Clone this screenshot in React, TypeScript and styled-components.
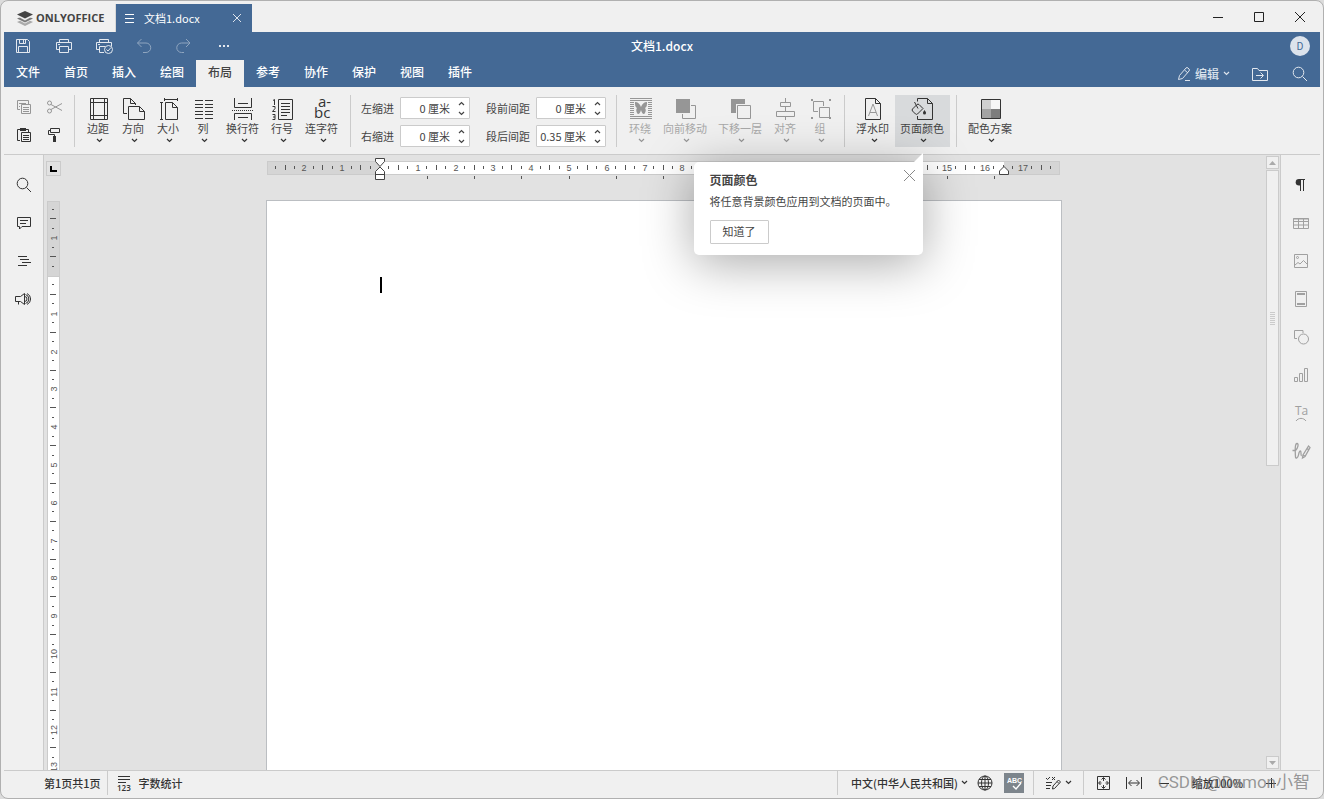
import React from "react";
import styled, { createGlobalStyle, css } from "styled-components";

const color = {
  brand: "#446995",
  panel: "#f0f0f0",
  canvas: "#e2e2e2",
  line: "#cbcbcb",
  text: "#444444",
  icon: "#333333",
  muted: "#a8a8a8",
  mutedIcon: "#969696",
};

const GlobalStyle = createGlobalStyle`
  *, *::before, *::after { box-sizing: border-box; }
  body {
    margin: 0;
    background: #dcdcdc;
    color: ${color.text};
    font-family: "Noto Sans CJK SC", "Open Sans", sans-serif;
    font-size: 11px;
    line-height: 16px;
  }
  button, input { font: inherit; color: inherit; }
  button { border: 0; padding: 0; background: none; cursor: pointer; white-space: nowrap; }
  svg { display: block; flex: none; overflow: visible; }
`;

/* ---------- Icons ---------- */

type IconProps = { w?: number; h?: number; x?: number; children: React.ReactNode };

const Icon = ({ w = 20, h = 20, x = 0, children }: IconProps) => (
  <svg width={w} height={h} viewBox={`${x} 0 ${w} ${h}`} fill="none" stroke="currentColor" aria-hidden="true">
    {children}
  </svg>
);

const Chevron = () => (
  <Icon w={7} h={5}>
    <path d="M1 1l2.5 2.5L6 1" strokeWidth="1.2" />
  </Icon>
);

const ChevronUp = () => (
  <Icon w={7} h={5}>
    <path d="M1 4l2.5-2.5L6 4" strokeWidth="1.2" />
  </Icon>
);

const SearchIcon = () => (
  <Icon>
    <circle cx="8.5" cy="8.5" r="5.3" />
    <path d="M12.5 12.5l4.5 4.5" />
  </Icon>
);

/* ---------- Window ---------- */

const Window = styled.div`
  height: 100vh;
  min-height: 480px;
  display: flex;
  flex-direction: column;
  padding: 0 3px;
  border: 1px solid #b0b0b0;
  border-radius: 8px;
  background: ${color.panel};
  overflow: hidden;
`;

const TitleBar = styled.header`
  display: flex;
  align-items: flex-end;
  height: 31px;
  flex: none;
`;

const Brand = styled.div`
  display: flex;
  align-items: center;
  gap: 2px;
  width: 112px;
  height: 28px;
  padding-left: 12px;
  border-right: 1px solid #d8d8d8;
  font: 700 11px/16px "Open Sans", sans-serif;
  color: #444;
`;

const FileTab = styled.div`
  display: flex;
  align-items: center;
  gap: 8px;
  width: 136px;
  height: 28px;
  padding: 0 10px 0 8px;
  background: ${color.brand};
  color: #fff;
`;

const FileName = styled.span`
  flex: 1;
  white-space: nowrap;
`;

const FileClose = styled.button`
  color: #dce3ec;
`;

const WindowControls = styled.div`
  display: flex;
  align-self: center;
  margin-left: auto;
`;

const WindowButton = styled.button`
  display: flex;
  align-items: center;
  justify-content: center;
  width: 41px;
  height: 28px;
  color: #222;
`;

/* ---------- Header ---------- */

const Header = styled.div`
  flex: none;
  background: ${color.brand};
  color: #fff;
`;

const QuickRow = styled.div`
  display: grid;
  grid-template-columns: 1fr auto 1fr;
  align-items: center;
  height: 28px;
`;

const QuickActions = styled.div`
  display: flex;
`;

const QuickButton = styled.button<{ $dim?: boolean }>`
  display: flex;
  align-items: center;
  justify-content: center;
  width: 40px;
  height: 28px;
  color: #fff;
  opacity: ${(p) => (p.$dim ? 0.4 : 0.85)};
`;

const DocumentTitle = styled.h1`
  margin: 0;
  font-size: 12px;
  font-weight: 500;
  line-height: 16px;
`;

const Avatar = styled.button`
  justify-self: end;
  width: 20px;
  height: 20px;
  margin-right: 10px;
  border-radius: 50%;
  background: #dce3ec;
  color: ${color.brand};
  font-size: 10px;
  line-height: 20px;
`;

const TabRow = styled.nav`
  display: flex;
  height: 27px;
`;

const RibbonTab = styled.button<{ $active?: boolean }>`
  width: 48px;
  font-size: 12px;
  font-weight: 500;
  line-height: 24px;
  padding-bottom: 3px;
  ${(p) =>
    p.$active &&
    css`
      background: ${color.panel};
      color: ${color.text};
    `}
`;

const TabActions = styled.div`
  display: flex;
  align-items: center;
  margin-left: auto;
  color: #dce3ec;
`;

const EditMode = styled.button`
  display: flex;
  align-items: center;
  gap: 4px;
  margin-right: 10px;
  font-size: 12px;
  font-weight: 500;
`;

/* ---------- Toolbar ---------- */

const Toolbar = styled.div`
  position: relative;
  z-index: 2;
  display: flex;
  align-items: center;
  flex: none;
  height: 68px;
  padding-left: 4px;
  border-bottom: 1px solid ${color.line};
`;

const Clipboard = styled.div`
  display: grid;
  grid-template-columns: 30px 30px;
  grid-auto-rows: 28px;
`;

const SmallButton = styled.button<{ $dim?: boolean }>`
  display: flex;
  align-items: center;
  justify-content: center;
  color: ${(p) => (p.$dim ? color.mutedIcon : color.icon)};
`;

const Separator = styled.span`
  flex: none;
  width: 1px;
  height: 52px;
  margin: 0 6px;
  background: ${color.line};
`;

const toolWidth = { s: 35, m: 44, l: 55 };

const ToolButton = styled.button<{ $size: "s" | "m" | "l"; $pressed?: boolean }>`
  display: flex;
  flex-direction: column;
  align-items: center;
  flex: none;
  width: ${(p) => toolWidth[p.$size]}px;
  height: 52px;
  padding-top: 2px;
  color: ${color.icon};
  background: ${(p) => (p.$pressed ? "#d8dadc" : "none")};

  &:disabled {
    color: ${color.mutedIcon};
    cursor: default;
  }
`;

const ToolLabel = styled.span`
  margin-bottom: 3px;
  padding-right: 1px;
  line-height: 14px;
  color: ${color.text};

  :disabled > & {
    color: ${color.muted};
  }
`;

const ToolArrow = styled.span`
  padding-left: 2px;
`;

const Fields = styled.div`
  display: grid;
  grid-template-columns: auto 70px auto 70px;
  align-items: center;
  gap: 6px;
  padding: 3px 4px 0;
`;

const FieldLabel = styled.label<{ $second?: boolean }>`
  margin-left: ${(p) => (p.$second ? 10 : 0)}px;
`;

const Spin = styled.div`
  display: flex;
  height: 22px;
  border: 1px solid ${color.line};
  border-radius: 1px;
  background: #fff;
`;

const SpinInput = styled.input`
  flex: 1;
  min-width: 0;
  padding: 0 3px 0 0;
  border: 0;
  background: none;
  text-align: right;
  outline: none;
`;

const SpinArrows = styled.div`
  display: flex;
  flex-direction: column;
  width: 16px;
`;

const SpinArrow = styled.button`
  flex: 1;
  display: flex;
  align-items: center;
  justify-content: center;
`;

/* ---------- Tip ---------- */

const TipAnchor = styled.div`
  position: relative;
  flex: none;
`;

const Tip = styled.div`
  position: absolute;
  top: 67px;
  right: 50%;
  width: 229px;
  padding: 10px 16px 11px;
  border-radius: 5px 0 5px 5px;
  background: #fff;
  box-shadow: 0 8px 50px rgba(0, 0, 0, 0.34);

  &::before {
    content: "";
    position: absolute;
    right: 0;
    bottom: 100%;
    border-left: 9px solid transparent;
    border-bottom: 9px solid #fff;
  }
`;

const TipTitle = styled.h2`
  margin: 0 0 5px;
  font-size: 12px;
  font-weight: 700;
  line-height: 16px;
`;

const TipText = styled.p`
  margin: 0 0 11px;
  white-space: nowrap;
`;

const TipClose = styled.button`
  position: absolute;
  top: 7px;
  right: 7px;
  color: #888;
`;

const TipButton = styled.button`
  width: 59px;
  height: 24px;
  padding-bottom: 2px;
  border: 1px solid ${color.line};
  border-radius: 1px;
`;

/* ---------- Workspace ---------- */

const Workspace = styled.main`
  display: flex;
  flex: 1;
  min-height: 0;
  background: ${color.canvas};
`;

const SideBar = styled.aside<{ $right?: boolean }>`
  display: flex;
  flex-direction: column;
  flex: none;
  width: 40px;
  padding-top: 11px;
  background: ${color.panel};
  ${(p) => (p.$right ? "border-left" : "border-right")}: 1px solid ${color.line};
`;

const SideButton = styled.button<{ $dim?: boolean }>`
  display: flex;
  align-items: center;
  justify-content: center;
  height: 38px;
  color: ${(p) => (p.$dim ? "#a0a0a0" : color.icon)};
`;

const RulerColumn = styled.div`
  display: flex;
  flex-direction: column;
  flex: none;
  width: 18px;
  padding: 6px 1px 0 2px;
`;

const TabStopButton = styled.button`
  display: flex;
  align-items: center;
  justify-content: center;
  flex: none;
  width: 15px;
  height: 15px;
  margin-bottom: 25px;
  border: 1px solid ${color.line};
`;

const RulerClip = styled.div`
  flex: 1;
  min-height: 0;
  padding-left: 1px;
  overflow: hidden;
`;

const Editor = styled.section`
  display: flex;
  flex-direction: column;
  align-items: center;
  flex: 1;
  min-width: 0;
  overflow: hidden;
`;

const RulerRow = styled.div`
  flex: none;
  width: 796px;
  height: 45px;
`;

const Page = styled.div`
  flex: 1;
  width: 796px;
  padding: 76px 113px 0;
  border: 1px solid #bbbec2;
  border-bottom: 0;
  background: #fff;
`;

const Caret = styled.span`
  display: block;
  width: 2px;
  height: 16px;
  background: #000;
`;

const ScrollBar = styled.div`
  display: flex;
  flex-direction: column;
  flex: none;
  gap: 1px;
  width: 14px;
  padding: 1px 1px 1px 0;
`;

const scrollPart = css`
  display: flex;
  align-items: center;
  justify-content: center;
  flex: none;
  border: 1px solid ${color.line};
  background: ${color.panel};
  color: #aaa;
`;

const ScrollButton = styled.button`
  ${scrollPart}
  height: 13px;
`;

const ScrollThumb = styled.div`
  ${scrollPart}
  height: 296px;
  margin-bottom: auto;
`;

/* ---------- Status bar ---------- */

const StatusBar = styled.footer`
  position: relative;
  display: flex;
  align-items: center;
  flex: none;
  height: 28px;
  padding: 0 10px 4px 40px;
  border-top: 1px solid ${color.line};
  font-weight: 500;
`;

const StatusDivider = styled.span<{ $push?: boolean }>`
  flex: none;
  width: 1px;
  height: 24px;
  margin-left: ${(p) => (p.$push ? "auto" : "0")};
  background: ${color.line};
`;

const StatusButton = styled.button<{ $left?: number; $right?: number; $gap?: number }>`
  display: flex;
  align-items: center;
  gap: ${(p) => p.$gap ?? 6}px;
  height: 24px;
  padding: 0 ${(p) => p.$right ?? 0}px 0 ${(p) => p.$left ?? 0}px;
  font-weight: 500;
  color: ${color.icon};
`;

const StatusGroup = styled.div<{ $left: number; $right: number; $gap: number }>`
  display: flex;
  align-items: center;
  gap: ${(p) => p.$gap}px;
  padding: 0 ${(p) => p.$right}px 0 ${(p) => p.$left}px;
`;

const SpellButton = styled.button`
  width: 20px;
  height: 20px;
  background: #7d858c;
  color: #fff;
`;

const Watermark = styled.span`
  position: absolute;
  right: 10px;
  top: 0;
  font: 400 17px/22px Roboto, "Noto Sans CJK SC", sans-serif;
  color: rgba(120, 120, 120, 0.75);
  white-space: nowrap;
  pointer-events: none;
`;

/* ---------- Rulers ---------- */

const CM = 37.8;

const marks = (from: number, to: number) => {
  const list: { q: number; pos: number }[] = [];
  for (let q = from; q <= to; q++) {
    if (q !== 0) list.push({ q, pos: Math.round((q * CM) / 4) });
  }
  return list;
};

const rulerText = {
  fontFamily: '"Liberation Sans", sans-serif',
  fontSize: 9,
  textAnchor: "middle" as const,
  fill: "#555",
  stroke: "none",
};

const HorizontalRuler = () => (
  <svg width="796" height="30" fill="none" stroke="#555" aria-label="水平标尺">
    <rect x="1.5" y="6.5" width="792" height="13" fill="#d5d5d5" stroke={color.line} />
    <rect x="114" y="7" width="624" height="12" fill="#fff" stroke="none" />
    {marks(-11, 71).map(({ q, pos }) => {
      const x = 113 + pos;
      if (q % 4 === 0) {
        return (
          <text key={q} x={x + 1} y="16" {...rulerText}>
            {Math.abs(q / 4)}
          </text>
        );
      }
      return <path key={q} d={q % 2 === 0 ? `M${x + 0.5} 10v5` : `M${x + 0.5} 11v3`} />;
    })}
    {Array.from({ length: 13 }, (_, i) => (
      <path key={i} d={`M${Math.round(113.5 + (i + 1) * 47.25) + 0.5} 21v3`} />
    ))}
    <g fill="#fff" stroke="#444">
      <path d="M109.5 3.5h9v3l-4.5 5-4.5-5z" />
      <path d="M109.5 24.5v-8l4.5-4.5 4.5 4.5v8zM109.5 19.5h9" />
      <path d="M733.5 19.5v-3.5l4.5-4.5 4.5 4.5v3.5z" />
    </g>
  </svg>
);

const VerticalRuler = () => (
  <svg width="13" height="1123" fill="none" stroke="#555" aria-label="垂直标尺">
    <rect x="0.5" y="0.5" width="12" height="1122" fill="#fff" stroke={color.line} />
    <rect x="0.5" y="0.5" width="12" height="75" fill="#d5d5d5" stroke={color.line} />
    {marks(-7, 108).map(({ q, pos }) => {
      const y = 75 + pos;
      if (q % 4 === 0) {
        return (
          <text key={q} transform={`translate(10 ${y}) rotate(-90)`} {...rulerText}>
            {Math.abs(q / 4)}
          </text>
        );
      }
      return <path key={q} d={q % 2 === 0 ? `M3 ${y - 0.5}h6` : `M5 ${y - 0.5}h2`} />;
    })}
  </svg>
);

/* ---------- Toolbar content ---------- */

type Tool = { label: string; size: "s" | "m" | "l"; icon: React.ReactNode; disabled?: boolean };

const columnRows = [3.5, 7.5, 10.5, 14.5, 17.5, 21.5];
const wrapRows = [5.5, 7.5, 9.5, 11.5, 13.5, 15.5, 17.5];

const pageTools: Tool[] = [
  {
    label: "边距",
    size: "s",
    icon: (
      <Icon w={25} h={24}>
        <path d="M4.5 1.5h17v21h-17zM7.5 1.5v21M18.5 1.5v21M4.5 5.5h17M4.5 18.5h17" />
      </Icon>
    ),
  },
  {
    label: "方向",
    size: "s",
    icon: (
      <Icon w={25} h={24}>
        <path d="M6 16.5H2.5v-15h7l5 5V8M9.5 1.5v5h5M7.5 9.5h11l5 5v8h-16zM18.5 9.5v5h5" />
      </Icon>
    ),
  },
  {
    label: "大小",
    size: "s",
    icon: (
      <Icon w={25} h={24}>
        <path d="M8 2.5h14M8.5 1v3M21.5 1v3M5.5 5v18M4 5.5h3M4 22.5h3M9.5 5.5h7l5 5v12h-12zM16.5 5.5v5h5" />
      </Icon>
    ),
  },
  {
    label: "列",
    size: "s",
    icon: (
      <Icon w={25} h={24}>
        {columnRows.map((y) => (
          <path key={y} d={`M4 ${y}h8M14 ${y}h8`} />
        ))}
      </Icon>
    ),
  },
  {
    label: "换行符",
    size: "m",
    icon: (
      <Icon w={24} h={24}>
        <path d="M3.5 1v9.5h17V1M7 6.5h10M3.5 23v-6.5h17V23M7 20.5h10" />
        <path d="M1 13.5h22" strokeDasharray="1 1" />
      </Icon>
    ),
  },
  {
    label: "行号",
    size: "s",
    icon: (
      <Icon w={25} h={24}>
        <path d="M8.5 2.5h14v20h-14zM11 6.5h9M11 9.5h9M11 12.5h9M11 15.5h9M11 18.5h6" />
        <path d="M3 3.500l1.500-1V8M2.500 9.500h2.500v2l-2.500 3h3M2.500 17.500H5v5H2.500M3 20h2" />
      </Icon>
    ),
  },
  {
    label: "连字符",
    size: "m",
    icon: (
      <Icon w={24} h={24}>
        <g fill="currentColor" stroke="none" fontFamily='"Open Sans", sans-serif' fontSize="15">
          <text x="8" y="10">a-</text>
          <text x="4" y="21">bc</text>
        </g>
      </Icon>
    ),
  },
];

const arrangeTools: Tool[] = [
  {
    label: "环绕",
    size: "s",
    disabled: true,
    icon: (
      <Icon w={25} h={24} x={1}>
        <path d="M3 1.5h22M3 3.5h22M3 19.5h22M3 21.5h22" />
        {wrapRows.map((y) => (
          <path key={y} d={`M3 ${y}h4M21 ${y}h4`} />
        ))}
        <path
          stroke="none"
          fill="currentColor"
          d="M8 5c3 0 5 2 6 5 1-3 3-5 6-5 0 3 0 5-2 6 1 1 1 3 0 5-1 2-3 1-4-3-1 4-3 5-4 3-1-2-1-4 0-5-2-1-2-3-2-6z"
        />
      </Icon>
    ),
  },
  {
    label: "向前移动",
    size: "l",
    disabled: true,
    icon: (
      <Icon w={25} h={24} x={1}>
        <path d="M4 2h14v14H4z" fill="currentColor" stroke="none" />
        <path d="M19 8.5h4.5v13h-13V17" />
      </Icon>
    ),
  },
  {
    label: "下移一层",
    size: "l",
    disabled: true,
    icon: (
      <Icon w={25} h={24} x={1}>
        <path d="M4 2h14v5H9v9H4z" fill="currentColor" stroke="none" />
        <path d="M10.5 8.5h13v13h-13z" />
      </Icon>
    ),
  },
  {
    label: "对齐",
    size: "s",
    disabled: true,
    icon: (
      <Icon w={25} h={24} x={1}>
        <path d="M13.5 1v4M13.5 10v4M13.5 20v3M8.5 5.5h10v4h-10zM4.5 14.5h18v5h-18z" />
      </Icon>
    ),
  },
  {
    label: "组",
    size: "s",
    disabled: true,
    icon: (
      <Icon w={25} h={24} x={1}>
        <path d="M11 14.5H6.5v-10h10V9M12.5 10.5h10v10h-10z" />
        <path d="M4 2h2v2H4zM22 2h2v2h-2zM4 20h2v2H4zM22 20h2v2h-2z" fill="currentColor" stroke="none" />
      </Icon>
    ),
  },
];

const WatermarkIcon = () => (
  <Icon w={24} h={24} x={1}>
    <path d="M5.5 1.5h10l5 5v16h-15zM15.5 1.5v5h5" />
    <path d="M8.5 19l4.500-12 4.500 12M10 15.500h6" stroke="#999" />
  </Icon>
);

const PageColorIcon = () => (
  <Icon w={25} h={24} x={1}>
    <path d="M8.5 4.500v-3h10l5 5v16h-15V19M18.5 1.500v5h5" />
    <path d="M8 7.500L3.500 12q-.8 1 0 2l3 3q1 .8 2 0L14 11.500l-4-4q-1-.8-2 0zM5.500 5l3.500 6.500" />
    <path d="M15.500 13c1 1.500 1.500 2 1.500 3a1.500 1.500 0 0 1-3 0c0-1 .5-1.500 1.500-3z" fill="currentColor" stroke="none" />
  </Icon>
);

const ColorSchemeIcon = () => (
  <Icon w={25} h={24} x={1}>
    <path d="M5 3h9v9H5z" fill="#cfcfcf" stroke="none" />
    <path d="M14 3h9v9h-9z" fill="#f6f6f6" stroke="none" />
    <path d="M5 12h9v9H5z" fill="#a3a3a3" stroke="none" />
    <path d="M14 12h9v9h-9z" fill="#7d7d7d" stroke="none" />
    <path d="M4.5 2.5h19v19h-19z" />
  </Icon>
);

const ToolItem = ({ label, size, icon, disabled, pressed }: Tool & { pressed?: boolean }) => (
  <ToolButton type="button" $size={size} $pressed={pressed} disabled={disabled}>
    {icon}
    <ToolLabel>{label}</ToolLabel>
    <ToolArrow>
      <Chevron />
    </ToolArrow>
  </ToolButton>
);

const SpinField = ({ id, label, value, second }: { id: string; label: string; value: string; second?: boolean }) => (
  <>
    <FieldLabel htmlFor={id} $second={second}>
      {label}
    </FieldLabel>
    <Spin>
      <SpinInput id={id} defaultValue={value} />
      <SpinArrows>
        <SpinArrow type="button" aria-label={`${label} +`}>
          <ChevronUp />
        </SpinArrow>
        <SpinArrow type="button" aria-label={`${label} -`}>
          <Chevron />
        </SpinArrow>
      </SpinArrows>
    </Spin>
  </>
);

/* ---------- Icon lists ---------- */

const quickActions = [
  {
    label: "保存",
    icon: (
      <Icon x={1}>
        <path d="M3.5 3.5h11l2 2v11h-13zM6.5 3.5v4h6v-4M5.5 16.5v-6h9v6" />
        <path d="M10.5 4v3" />
      </Icon>
    ),
  },
  {
    label: "打印",
    icon: (
      <Icon>
        <path d="M5.5 6.5v-3h9v3M5 13.5H2.5v-7h15v7H15M5.5 10.5h9v6h-9zM4 8.5h2" />
      </Icon>
    ),
  },
  {
    label: "快速打印",
    icon: (
      <Icon>
        <path d="M5.5 6.5v-3h9v3M5 13.5H2.5v-7h15V10M10 16.5H5.5v-6H11M4 8.5h2" />
        <circle cx="14.500" cy="13.500" r="4" />
        <path d="M12.5 13.5l1.500 1.500 3-3.500" />
      </Icon>
    ),
  },
  {
    label: "撤销",
    dim: true,
    icon: (
      <Icon>
        <path d="M7.5 3L3.5 7l4 4M3.5 7H12a4.500 4.500 0 0 1 0 9.500H9" />
      </Icon>
    ),
  },
  {
    label: "重做",
    dim: true,
    icon: (
      <Icon>
        <path d="M12 3l4 4-4 4M16 7H7.500a4.500 4.500 0 0 0 0 9.500H10" />
      </Icon>
    ),
  },
  {
    label: "更多",
    icon: (
      <Icon>
        <path d="M5 10h2M9 10h2M13 10h2" strokeWidth="2" />
      </Icon>
    ),
  },
];

const clipboard = [
  {
    label: "复制",
    dim: true,
    icon: (
      <Icon>
        <path d="M7 12.500H4.500v-9h11V7M6 6.500h7M6 9.500h1M8.500 7.500h9v9h-9zM10 10.500h6M10 12.500h6M10 14.500h6" />
      </Icon>
    ),
  },
  {
    label: "剪切",
    dim: true,
    icon: (
      <Icon>
        <circle cx="6.500" cy="6" r="2" />
        <circle cx="6.500" cy="14" r="2" />
        <path d="M8 7.500l11 6M8 12.500l11-6" />
      </Icon>
    ),
  },
  {
    label: "粘贴",
    icon: (
      <Icon>
        <path d="M7 15.500H4.500v-11H7M13 4.500h2.500V7M8.500 7.500h9v9h-9zM10 10.500h6M10 12.500h6M10 14.500h6" />
        <path d="M7 3h6v3H7z" fill="currentColor" stroke="none" />
      </Icon>
    ),
  },
  {
    label: "复制样式",
    icon: (
      <Icon>
        <path d="M7.500 3.500h9v4h-9zM7 5.500H5.500v4h6V12" />
        <path d="M10 11h3v6h-3z" fill="currentColor" stroke="none" />
      </Icon>
    ),
  },
];

const leftPanel = [
  { label: "查找", icon: <SearchIcon /> },
  {
    label: "批注",
    icon: (
      <Icon>
        <path d="M3.500 4.500h13v9H8L5.500 16v-2.500h-2zM6 7.500h8M6 10.500h6" />
      </Icon>
    ),
  },
  {
    label: "标题",
    icon: (
      <Icon>
        <path d="M4 5.500h9M6 8.500h9M8 11.500h9M4 14.500h9" />
      </Icon>
    ),
  },
  {
    label: "反馈与支持",
    icon: (
      <Icon x={1}>
        <path d="M2.500 7.500h5l4-3v11l-4-3h-5zM5.500 12.500v3M11.500 7.500a2.500 2.500 0 0 1 0 5M12.500 5.500a4.700 4.700 0 0 1 0 9M14 4.500a6 6 0 0 1 0 11" />
      </Icon>
    ),
  },
];

const rightPanel = [
  {
    label: "段落",
    icon: (
      <Icon x={1}>
        <path d="M10.500 4.500v11.500M13.500 4.500v11.500M9 4.500h6" />
        <path d="M10.500 4H9a3.300 3.300 0 0 0 0 6.600h1.500z" fill="currentColor" stroke="none" />
      </Icon>
    ),
  },
  {
    label: "表格",
    icon: (
      <Icon>
        <path d="M2.500 5.500h15v10h-15zM2.500 8.500h15M2.500 12h15M7.500 6v9M12.500 6v9M2 6h16" />
      </Icon>
    ),
  },
  {
    label: "图片",
    icon: (
      <Icon>
        <path d="M3.500 3.500h13v13h-13zM4 14l3-2.500 2 1.500 3.500-3.500L16 13" />
        <circle cx="6.500" cy="6.500" r="1" />
      </Icon>
    ),
  },
  {
    label: "页眉和页脚",
    icon: (
      <Icon>
        <path d="M4.500 2.500h11v15h-11z" />
        <path d="M6 5h8M6 15h8" strokeWidth="2" />
      </Icon>
    ),
  },
  {
    label: "形状",
    icon: (
      <Icon>
        <path d="M6 11.500H3.500v-8h8.500V6" />
        <circle cx="12.500" cy="12" r="5" />
      </Icon>
    ),
  },
  {
    label: "图表",
    icon: (
      <Icon>
        <path d="M3.500 12.500h3v4h-3zM8.500 8.500h3v8h-3zM13.500 3.500h3v13h-3z" />
      </Icon>
    ),
  },
  {
    label: "艺术字",
    icon: (
      <Icon>
        <text x="4" y="12" fill="currentColor" stroke="none" fontFamily='"Open Sans", sans-serif' fontSize="12">
          Ta
        </text>
        <path d="M5 18c2.500-3.500 7.500-3.500 10 0" />
      </Icon>
    ),
  },
  {
    label: "签名",
    icon: (
      <Icon>
        <path
          strokeWidth="1.300"
          d="M1.500 9.500h3C7 7 8 2.500 6 2.500S4 8 4.500 16c0 2 2.500 1 3-2s1-4 2-4 0 4 1 5M17.500 5l-5.500 9-.5 3 2.500-1.500 5-9zM16 7.500l1.500 1M12 14l2 1"
        />
      </Icon>
    ),
  },
];

const tabs = ["文件", "首页", "插入", "绘图", "布局", "参考", "协作", "保护", "视图", "插件"];

export default function App() {
  return (
    <>
      <GlobalStyle />
      <Window>
        <TitleBar>
          <Brand>
            <Icon w={18} h={18}>
              <g stroke="none">
                <path d="M9 9.500l8 3.500-8 4-8-4z" fill="#aaa" />
                <path d="M9 6l8 4-8 4.500L1 10z" fill="#f0f0f0" />
                <path d="M9 6.500l8 3-8 4-8-4z" fill="#7a7a7a" />
                <path d="M9 3l8 4-8 4.500L1 7z" fill="#f0f0f0" />
                <path d="M9 2l8 3.500-8 4-8-4z" fill="#444" />
              </g>
            </Icon>
            ONLYOFFICE
          </Brand>
          <FileTab>
            <Icon w={12} h={12}>
              <path d="M1 2.500h9M1 6.500h9M1 10.500h9" />
            </Icon>
            <FileName>文档1.docx</FileName>
            <FileClose type="button" aria-label="关闭文档">
              <Icon w={10} h={10}>
                <path d="M1 1l8 8M9 1L1 9" />
              </Icon>
            </FileClose>
          </FileTab>
          <WindowControls>
            <WindowButton type="button" aria-label="最小化">
              <Icon w={12} h={12}>
                <path d="M1 6.500h10" />
              </Icon>
            </WindowButton>
            <WindowButton type="button" aria-label="最大化">
              <Icon w={12} h={12}>
                <path d="M1.500 1.500h9v9h-9z" />
              </Icon>
            </WindowButton>
            <WindowButton type="button" aria-label="关闭">
              <Icon w={12} h={12}>
                <path d="M1 1l10 10M11 1L1 11" />
              </Icon>
            </WindowButton>
          </WindowControls>
        </TitleBar>

        <Header>
          <QuickRow>
            <QuickActions>
              {quickActions.map((a) => (
                <QuickButton key={a.label} type="button" aria-label={a.label} $dim={a.dim}>
                  {a.icon}
                </QuickButton>
              ))}
            </QuickActions>
            <DocumentTitle>文档1.docx</DocumentTitle>
            <Avatar type="button">D</Avatar>
          </QuickRow>
          <TabRow>
            {tabs.map((t) => (
              <RibbonTab key={t} type="button" $active={t === "布局"}>
                {t}
              </RibbonTab>
            ))}
            <TabActions>
              <EditMode type="button">
                <Icon w={14} h={16}>
                  <path d="M1.500 13.500l1-4 6.500-7.500a1.400 1.400 0 0 1 2 0l1 1a1.400 1.400 0 0 1 0 2l-6.500 7.500zM7.500 4l3.500 3M8 14.500h5" />
                </Icon>
                编辑
                <Chevron />
              </EditMode>
              <QuickButton type="button" aria-label="打开文件位置">
                <Icon>
                  <path d="M2.500 16.500v-12h5l1.500 2h8.500v10zM6 11.500h7M10.500 8.500l3 3-3 3" />
                </Icon>
              </QuickButton>
              <QuickButton type="button" aria-label="查找">
                <SearchIcon />
              </QuickButton>
            </TabActions>
          </TabRow>
        </Header>

        <Toolbar>
          <Clipboard>
            {clipboard.map((c) => (
              <SmallButton key={c.label} type="button" aria-label={c.label} $dim={c.dim}>
                {c.icon}
              </SmallButton>
            ))}
          </Clipboard>
          <Separator />
          {pageTools.map((t) => (
            <ToolItem key={t.label} {...t} />
          ))}
          <Separator />
          <Fields>
            <SpinField id="indent-left" label="左缩进" value="0 厘米" />
            <SpinField id="space-before" label="段前间距" value="0 厘米" second />
            <SpinField id="indent-right" label="右缩进" value="0 厘米" />
            <SpinField id="space-after" label="段后间距" value="0.35 厘米" second />
          </Fields>
          <Separator />
          {arrangeTools.map((t) => (
            <ToolItem key={t.label} {...t} />
          ))}
          <Separator />
          <ToolItem label="浮水印" size="m" icon={<WatermarkIcon />} />
          <TipAnchor>
            <ToolItem label="页面颜色" size="l" icon={<PageColorIcon />} pressed />
            <Tip role="dialog" aria-label="页面颜色">
              <TipTitle>页面颜色</TipTitle>
              <TipText>将任意背景颜色应用到文档的页面中。</TipText>
              <TipButton type="button">知道了</TipButton>
              <TipClose type="button" aria-label="关闭提示">
                <Icon w={13} h={13}>
                  <path d="M1 1l11 11M12 1L1 12" />
                </Icon>
              </TipClose>
            </Tip>
          </TipAnchor>
          <Separator />
          <ToolItem label="配色方案" size="l" icon={<ColorSchemeIcon />} />
        </Toolbar>

        <Workspace>
          <SideBar>
            {leftPanel.map((p) => (
              <SideButton key={p.label} type="button" aria-label={p.label}>
                {p.icon}
              </SideButton>
            ))}
          </SideBar>
          <RulerColumn>
            <TabStopButton type="button" aria-label="制表符">
              <svg width="7" height="7" fill="none" stroke="#000" strokeWidth="2" aria-hidden="true">
                <path d="M1 1v5h6" />
              </svg>
            </TabStopButton>
            <RulerClip>
              <VerticalRuler />
            </RulerClip>
          </RulerColumn>
          <Editor>
            <RulerRow>
              <HorizontalRuler />
            </RulerRow>
            <Page role="textbox" aria-label="文档正文">
              <Caret />
            </Page>
          </Editor>
          <ScrollBar>
            <ScrollButton type="button" aria-label="向上滚动">
              <Icon w={7} h={4}>
                <path d="M0 4l3.500-4L7 4z" fill="currentColor" stroke="none" />
              </Icon>
            </ScrollButton>
            <ScrollThumb>
              <Icon w={5} h={13}>
                <path d="M0 .5h5M0 2.500h5M0 4.500h5M0 6.500h5M0 8.500h5M0 10.500h5M0 12.500h5" stroke="#cbcbcb" />
              </Icon>
            </ScrollThumb>
            <ScrollButton type="button" aria-label="向下滚动">
              <Icon w={7} h={4}>
                <path d="M0 0l3.500 4L7 0z" fill="currentColor" stroke="none" />
              </Icon>
            </ScrollButton>
          </ScrollBar>
          <SideBar $right>
            {rightPanel.map((p, i) => (
              <SideButton key={p.label} type="button" aria-label={p.label} $dim={i > 0}>
                {p.icon}
              </SideButton>
            ))}
          </SideBar>
        </Workspace>

        <StatusBar>
          <StatusButton type="button" $right={6}>
            第1页共1页
          </StatusButton>
          <StatusDivider />
          <StatusButton type="button" $left={9} $right={9}>
            <Icon w={16} h={16}>
              <path d="M1 1.500h12M1 4.500h12M1 7.500h8" />
              <text
                x="0"
                y="16"
                fill="currentColor"
                stroke="none"
                fontFamily='"Open Sans", sans-serif'
                fontSize="8"
                fontWeight="600"
              >
                123
              </text>
            </Icon>
            字数统计
          </StatusButton>

          <StatusDivider $push />
          <StatusGroup $left={13} $right={9} $gap={9}>
            <StatusButton type="button" $gap={3}>
              中文(中华人民共和国)
              <Chevron />
            </StatusButton>
            <StatusButton type="button" aria-label="设置文档语言" $right={2}>
              <Icon w={16} h={16}>
                <circle cx="8" cy="8" r="7" />
                <ellipse cx="8" cy="8" rx="3.500" ry="7" />
                <path d="M8 1v14M1 8h14M2 4.500h12M2 11.500h12" />
              </Icon>
            </StatusButton>
            <SpellButton type="button" aria-label="拼写检查">
              <Icon>
                <text
                  x="3"
                  y="10"
                  fill="currentColor"
                  stroke="none"
                  fontFamily='"Liberation Sans", sans-serif'
                  fontSize="7"
                  fontWeight="700"
                >
                  ABC
                </text>
                <path d="M9 13l3 3 5-6" strokeWidth="1.400" />
              </Icon>
            </SpellButton>
          </StatusGroup>
          <StatusDivider />
          <StatusButton type="button" aria-label="修订" $left={11} $right={11} $gap={4}>
            <Icon w={16} h={16}>
              <path d="M1 3l1.500 1.500L5 2M7 2l3 3M10 2L7 5M1 7.500h6M1 10.500h5M1 13.500h4M7.500 14l.5-3 5.500-6 2 2-6 6.500zM12 6.500l2 2" />
            </Icon>
            <Chevron />
          </StatusButton>
          <StatusDivider />
          <StatusGroup $left={12} $right={20} $gap={13}>
            <StatusButton type="button" aria-label="适应页面">
              <Icon w={16} h={16}>
                <path d="M1.500 1.500h12v13h-12zM7.500 3v3M5.500 4.500l2-2 2 2M7.500 13v-3M5.500 11.500l2 2 2-2M3 8h2.500M4.500 6L2.500 8l2 2M12 8H9.500M10.500 6l2 2-2 2" />
              </Icon>
            </StatusButton>
            <StatusButton type="button" aria-label="适应宽度">
              <Icon w={18} h={16}>
                <path d="M1.500 2v12M16.500 2v12M4 8h10M6.500 5L3.500 8l3 3M11.500 5l3 3-3 3" />
              </Icon>
            </StatusButton>
            <StatusButton type="button" aria-label="缩小">
              <Icon w={16} h={16}>
                <path d="M3 8.500h10" />
              </Icon>
            </StatusButton>
          </StatusGroup>
          <StatusButton type="button">缩放100%</StatusButton>
          <StatusGroup $left={22} $right={33} $gap={0}>
            <StatusButton type="button" aria-label="放大">
              <Icon w={12} h={12}>
                <path d="M1 6.500h10M6.500 1v10" />
              </Icon>
            </StatusButton>
          </StatusGroup>
          <Watermark>CSDN @Damon小智</Watermark>
        </StatusBar>
      </Window>
    </>
  );
}
